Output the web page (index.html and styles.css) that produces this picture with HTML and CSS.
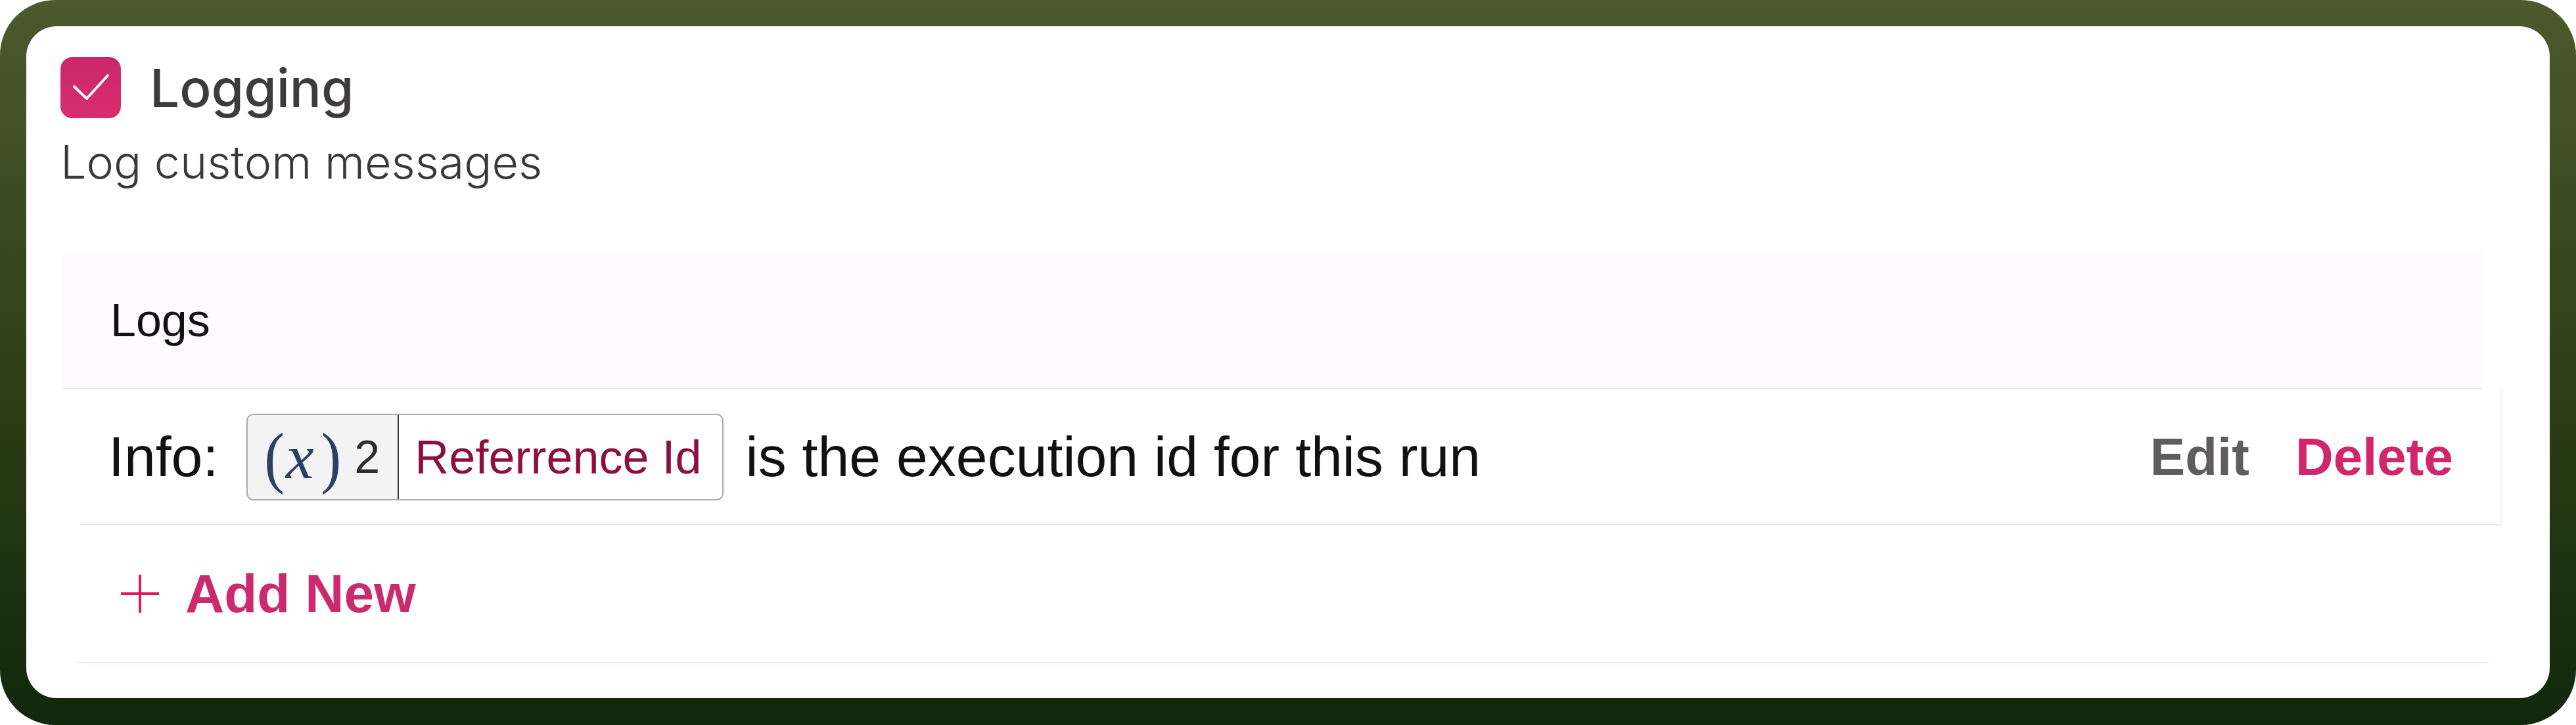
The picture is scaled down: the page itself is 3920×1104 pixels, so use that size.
FILE: index.html
```html
<!DOCTYPE html>
<html lang="en">
<head>
    <meta charset="UTF-8">
    <title>Logging</title>
    <link rel="stylesheet" href="styles.css">
</head>
<body>
    <div class="frame">
        <div class="card">
            <div class="title-row">
                <span class="checkbox">
                    <svg width="92" height="93" viewBox="0 0 92 93">
                        <polyline points="21,45 40,63 72,28" fill="none" stroke="#fff" stroke-width="4" stroke-linecap="round" stroke-linejoin="round"/>
                    </svg>
                </span>
                <h1 class="title">Logging</h1>
            </div>
            <p class="subtitle">Log custom messages</p>

            <div class="logs">
                <div class="logs-head">Logs</div>

                <div class="log-row">
                    <span class="log-level">Info:</span>
                    <span class="chip">
                        <span class="chip-var"><span class="paren">(</span><i class="var-x">x</i><span class="paren">)</span><span class="var-num">2</span></span>
                        <span class="chip-name">Referrence Id</span>
                    </span>
                    <span class="log-text">is the execution id for this run</span>
                    <span class="row-actions">
                        <button class="btn btn-edit">Edit</button>
                        <button class="btn btn-delete">Delete</button>
                    </span>
                </div>

                <div class="add-row">
                    <svg width="58" height="58" viewBox="0 0 58 58">
                        <path d="M29 0 V58 M0 29 H58" stroke="#d81b60" stroke-width="4"/>
                    </svg>
                    <span class="add-label">Add New</span>
                </div>
            </div>
        </div>
    </div>
</body>
</html>
```

FILE: styles.css
```css
html, body {
    margin: 0;
    background: #fff;
}
.frame {
    width: 3920px;
    height: 1104px;
    box-sizing: border-box;
    padding: 40px 40px 41px 40px;
    border-radius: 84px;
    background: linear-gradient(180deg, #4c5a2d 0%, #2f4119 50%, #10280a 100%);
}
.card {
    height: 100%;
    box-sizing: border-box;
    background: #fff;
    border-radius: 46px;
    padding: 47px 73px 0 52px;
    overflow: hidden;
}
.title-row {
    display: flex;
    align-items: center;
    height: 93px;
}
.checkbox {
    width: 92px;
    height: 93px;
    border-radius: 18px;
    background: linear-gradient(180deg, #c8296c 0%, #d92d6b 100%);
    display: flex;
}
.title {
    margin: 0 0 0 44px;
    font-family: Inter, "Liberation Sans", sans-serif;
    font-weight: 500;
    font-size: 80px;
    color: #3e3b3d;
}
.subtitle {
    margin: 26px 0 0 0;
    font-family: Inter, "Liberation Sans", sans-serif;
    font-weight: 300;
    font-size: 70px;
    line-height: 82px;
    color: #3a3839;
}
.logs {
    margin: 97px 0 0 4px;
    font-family: "Liberation Sans", Arial, sans-serif;
}
.logs-head {
    height: 208px;
    box-sizing: border-box;
    margin-right: 30px;
    padding-left: 72px;
    display: flex;
    align-items: center;
    background: #fdfbfd;
    border-bottom: 2px solid #eee9ec;
    box-shadow: 0 -4px 14px rgba(0, 0, 0, 0.01);
    font-size: 70px;
    color: #111;
}
.log-row {
    height: 207px;
    box-sizing: border-box;
    margin-left: 26px;
    padding: 0 72px 0 43px;
    display: flex;
    align-items: center;
    border-bottom: 2px solid #e9e9e9;
    border-right: 2px solid #f0f0f0;
    font-size: 86px;
    color: #111;
}
.log-level {
    margin-right: 43px;
}
.chip {
    display: flex;
    height: 132px;
    box-sizing: border-box;
    border: 2px solid #a9a9a9;
    border-radius: 11px;
    overflow: hidden;
    margin-right: 34px;
}
.chip-var {
    width: 230px;
    box-sizing: border-box;
    padding-left: 25px;
    display: flex;
    align-items: center;
    background: #f3f3f3;
    border-right: 2px solid #3a3a3a;
    color: #2c3f66;
    font-family: "Liberation Serif", "DejaVu Serif", serif;
}
.paren {
    display: inline-block;
    font-size: 92px;
    transform: scaleY(1.12);
}
.var-x {
    font-size: 96px;
    margin: 0 11px 0 2px;
}
.var-num {
    margin-left: 20px;
    font-family: "Liberation Sans", Arial, sans-serif;
    font-size: 70px;
    color: #2e2e2e;
}
.chip-name {
    display: flex;
    align-items: center;
    padding: 0 31px 0 24px;
    font-size: 72px;
    color: #8c0f40;
    background: #fff;
}
.log-text {
    flex: 1;
}
.row-actions {
    display: flex;
    gap: 70px;
}
.btn {
    border: none;
    background: none;
    padding: 0;
    font-family: "Liberation Sans", Arial, sans-serif;
    font-weight: bold;
    font-size: 80px;
    cursor: pointer;
}
.btn-edit {
    color: #5f5c5e;
}
.btn-delete {
    color: #d2266a;
}
.add-row {
    height: 210px;
    box-sizing: border-box;
    margin: 0 20px 0 22px;
    padding-left: 66px;
    display: flex;
    align-items: center;
    gap: 40px;
    border-bottom: 2px solid #ebebeb;
    box-shadow: 0 14px 24px rgba(0, 0, 0, 0.012);
}
.add-label {
    font-weight: bold;
    font-size: 82px;
    color: #cb2a6c;
}
```
